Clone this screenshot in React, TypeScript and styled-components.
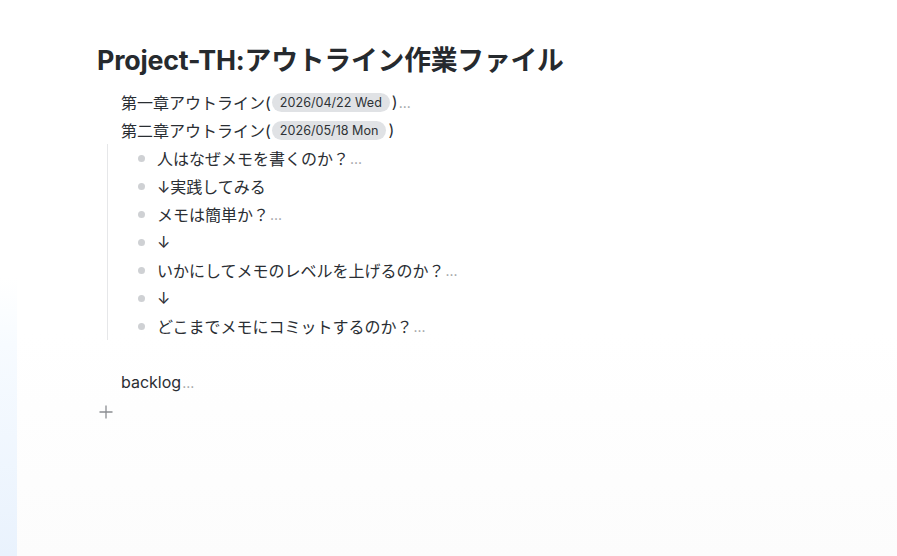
import React from "react";
import styled, { createGlobalStyle } from "styled-components";

const GlobalStyle = createGlobalStyle`
  html, body {
    margin: 0;
    padding: 0;
    background: #ffffff;
  }
  body {
    font-family: "Inter", "Noto Sans CJK JP", sans-serif;
    color: #2a2e33;
  }
`;

type Child = { text: string; more?: boolean };

const chapters = [
  { title: "第一章アウトライン(", date: "2026/04/22 Wed", more: true },
  { title: "第二章アウトライン(", date: "2026/05/18 Mon", more: false },
];

const items: Child[] = [
  { text: "人はなぜメモを書くのか？", more: true },
  { text: "↓実践してみる" },
  { text: "メモは簡単か？", more: true },
  { text: "↓" },
  { text: "いかにしてメモのレベルを上げるのか？", more: true },
  { text: "↓" },
  { text: "どこまでメモにコミットするのか？", more: true },
];

function App() {
  return (
    <Page>
      <GlobalStyle />
      <SideStrip />
      <Main>
        <Title>Project-TH:アウトライン作業ファイル</Title>
        <Outline>
          {chapters.map((c) => (
            <Row key={c.date}>
              {c.title}
              <DatePill>{c.date}</DatePill>)
              {c.more && <More>...</More>}
            </Row>
          ))}
          <Children>
            {items.map((it, i) => (
              <Row key={i}>
                <Dot />
                {it.text}
                {it.more && <More>...</More>}
              </Row>
            ))}
          </Children>
          <Spacer />
          <Row>
            backlog<More>...</More>
          </Row>
        </Outline>
        <AddButton aria-label="add">
          <svg width="14" height="14" viewBox="0 0 14 14">
            <path d="M7 0.5v13M0.5 7h13" stroke="#8a8d91" strokeWidth="1.3" fill="none" />
          </svg>
        </AddButton>
      </Main>
    </Page>
  );
}

const Page = styled.div`
  display: flex;
  width: 897px;
  height: 556px;
  overflow: hidden;
  background: linear-gradient(180deg, #ffffff 0%, #ffffff 60%, #fcfcfc 100%);
`;

const SideStrip = styled.div`
  flex: 0 0 17px;
  background: linear-gradient(
    180deg,
    rgba(255, 255, 255, 0) 0%,
    rgba(255, 255, 255, 0) 50%,
    #f7fbff 62%,
    #e9f2fd 100%
  );
`;

const Main = styled.div`
  flex: 1;
  padding: 40px 0 0 80px;
`;

const Title = styled.h1`
  margin: 0 0 8px;
  font-size: 26.8px;
  font-weight: 700;
  line-height: 40px;
  letter-spacing: -0.2px;
  color: #262a2e;
`;

const Outline = styled.div`
  padding-left: 24px;
  display: flex;
  flex-direction: column;
`;

const Row = styled.div`
  display: flex;
  align-items: center;
  height: 28px;
  font-size: 16px;
  white-space: nowrap;
`;

const DatePill = styled.span`
  display: inline-flex;
  align-items: center;
  height: 19px;
  margin: 0 2px 0 1px;
  padding: 0 8px;
  border-radius: 9.5px;
  background: #e0e2e5;
  font-family: "Inter", sans-serif;
  font-size: 12.6px;
  color: #2e3236;
`;

const More = styled.span`
  color: #9a9da1;
  font-size: 14px;
  margin-left: 1px;
`;

const Children = styled.div`
  display: flex;
  flex-direction: column;
  margin-left: -14px;
  padding-left: 30px;
  border-left: 1px solid #e6e7e9;
`;

const Dot = styled.span`
  width: 7px;
  height: 7px;
  border-radius: 50%;
  background: #cfd1d4;
  margin-right: 12px;
  flex: none;
`;

const Spacer = styled.div`
  height: 28px;
`;

const AddButton = styled.button`
  display: flex;
  align-items: center;
  justify-content: center;
  width: 20px;
  height: 20px;
  margin: 6px 0 0 -1px;
  padding: 0;
  border: none;
  background: transparent;
  cursor: pointer;
`;

export default App;
